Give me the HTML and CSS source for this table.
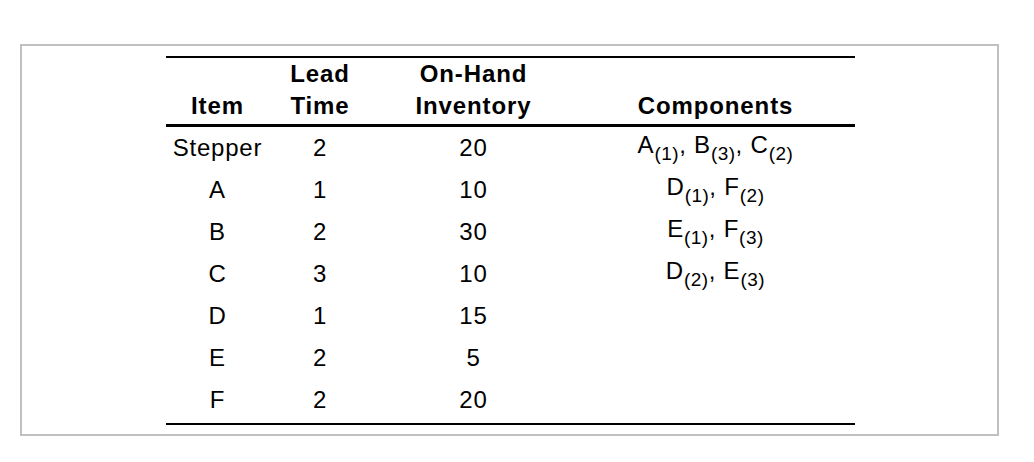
FILE: index.html
```html
<!DOCTYPE html>
<html>
<head>
<meta charset="utf-8">
<link rel="stylesheet" href="styles.css">
</head>
<body>
<div class="frame">
  <table class="inv">
    <colgroup>
      <col class="c-item">
      <col class="c-lead">
      <col class="c-hand">
      <col class="c-comp">
    </colgroup>
    <thead>
      <tr>
        <th>Item</th>
        <th>Lead<br>Time</th>
        <th>On-Hand<br>Inventory</th>
        <th>Components</th>
      </tr>
    </thead>
    <tbody>
      <tr><td>Stepper</td><td>2</td><td>20</td><td class="comp">A<sub>(1)</sub>, B<sub>(3)</sub>, C<sub>(2)</sub></td></tr>
      <tr><td>A</td><td>1</td><td>10</td><td class="comp">D<sub>(1)</sub>, F<sub>(2)</sub></td></tr>
      <tr><td>B</td><td>2</td><td>30</td><td class="comp">E<sub>(1)</sub>, F<sub>(3)</sub></td></tr>
      <tr><td>C</td><td>3</td><td>10</td><td class="comp">D<sub>(2)</sub>, E<sub>(3)</sub></td></tr>
      <tr><td>D</td><td>1</td><td>15</td><td class="comp"></td></tr>
      <tr><td>E</td><td>2</td><td>5</td><td class="comp"></td></tr>
      <tr class="last"><td>F</td><td>2</td><td>20</td><td class="comp"></td></tr>
    </tbody>
  </table>
</div>
</body>
</html>
```

FILE: styles.css
```css
html, body {
  margin: 0;
  padding: 0;
  background: #ffffff;
}

body {
  font-family: "Liberation Sans", Arial, sans-serif;
  color: #000000;
}

.frame {
  box-sizing: border-box;
  margin: 44px 0 0 20px;
  width: 979px;
  height: 392px;
  border: 2px solid #c0c0c0;
  padding: 10px 0 0 144px;
}

.inv {
  border-collapse: collapse;
  table-layout: fixed;
  width: 689px;
  border-top: 2px solid #000000;
}

.c-item { width: 103px; }
.c-lead { width: 102px; }
.c-hand { width: 205px; }
.c-comp { width: 279px; }

.inv th {
  font-weight: bold;
  font-size: 24px;
  letter-spacing: 0.9px;
  line-height: 32px;
  text-align: center;
  vertical-align: bottom;
  padding: 0 0 2px 0;
  border-bottom: 3px solid #000000;
}

.inv td {
  box-sizing: content-box;
  font-size: 24px;
  letter-spacing: 0.8px;
  line-height: 42px;
  height: 42px;
  padding: 0;
  text-align: center;
  vertical-align: top;
  white-space: nowrap;
}

.inv td.comp {
  line-height: 36px;
  height: 36px;
  padding-bottom: 6px;
}

.inv tr.last td {
  border-bottom: 2px solid #000000;
  padding-bottom: 2px;
}

.inv tr.last td.comp {
  height: 42px;
  padding-bottom: 2px;
}

.inv sub {
  font-size: 19px;
  letter-spacing: 0.5px;
  line-height: 0;
  vertical-align: -7px;
}
```
